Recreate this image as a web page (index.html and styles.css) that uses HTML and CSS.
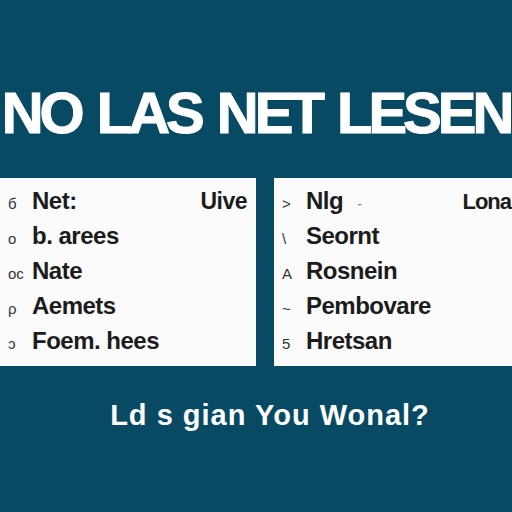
FILE: index.html
```html
<!DOCTYPE html>
<html>
<head>
<meta charset="utf-8">
<link rel="stylesheet" href="styles.css">
</head>
<body>
<div class="page">
  <h1 class="title">NO LAS NET LESEN</h1>
  <div class="panels">
    <div class="panel panel-left">
      <div class="row"><span class="bullet">б</span><span class="label">Net:</span><span class="aside">Uive</span></div>
      <div class="row"><span class="bullet">o</span><span class="label">b. arees</span></div>
      <div class="row"><span class="bullet">oc</span><span class="label">Nate</span></div>
      <div class="row"><span class="bullet">ρ</span><span class="label">Aemets</span></div>
      <div class="row"><span class="bullet">ɔ</span><span class="label">Foem. hees</span></div>
    </div>
    <div class="panel panel-right">
      <div class="row"><span class="bullet">˃</span><span class="label">Nlg</span><span class="dash">-</span><span class="aside">Lona</span></div>
      <div class="row"><span class="bullet">\</span><span class="label">Seornt</span></div>
      <div class="row"><span class="bullet">A</span><span class="label">Rosnein</span></div>
      <div class="row"><span class="bullet">~</span><span class="label">Pembovare</span></div>
      <div class="row"><span class="bullet">5</span><span class="label">Hretsan</span></div>
    </div>
  </div>
  <p class="footer">Ld s gian You Wonal?</p>
</div>
</body>
</html>
```
FILE: styles.css
```css
html, body {
  margin: 0;
  padding: 0;
}
body {
  background: #084a64;
  width: 512px;
  height: 512px;
  overflow: hidden;
  font-family: "Liberation Sans", Arial, sans-serif;
}
.page {
  display: flex;
  flex-direction: column;
  width: 512px;
}
.title {
  margin: 82px 0 0 0;
  font-size: 58px;
  line-height: 61px;
  font-weight: 700;
  color: #ffffff;
  letter-spacing: -4px;
  word-spacing: 4px;
  white-space: nowrap;
  text-align: center;
  -webkit-text-stroke: 1px #ffffff;
}
.panels {
  display: flex;
  gap: 18px;
  margin-top: 35px;
  height: 188px;
}
.panel {
  background: #fbfbfb;
  box-sizing: border-box;
  padding-top: 5px;
  display: flex;
  flex-direction: column;
}
.panel-left {
  width: 256px;
  padding-left: 8px;
  padding-right: 9px;
}
.panel-right {
  flex: 1;
  padding-left: 8px;
  padding-right: 1px;
}
.row {
  display: flex;
  align-items: baseline;
  height: 35px;
  line-height: 35px;
  color: #1c1c1c;
  white-space: nowrap;
}
.bullet {
  width: 24px;
  font-size: 15px;
  color: #333;
  text-align: left;
}
.label {
  font-size: 24px;
  font-weight: 700;
  letter-spacing: -0.5px;
}
.dash {
  font-size: 14px;
  color: #777;
  margin-left: 14px;
}
.aside {
  margin-left: auto;
  font-size: 23px;
  font-weight: 700;
  letter-spacing: -0.5px;
}
.panel-right .aside {
  font-size: 22px;
  letter-spacing: -1px;
}
.footer {
  margin: 35px 0 0 0;
  font-size: 29px;
  line-height: 28px;
  font-weight: 700;
  color: #ffffff;
  text-align: center;
  letter-spacing: 1px;
  padding-left: 28px;
  white-space: nowrap;
}
```
